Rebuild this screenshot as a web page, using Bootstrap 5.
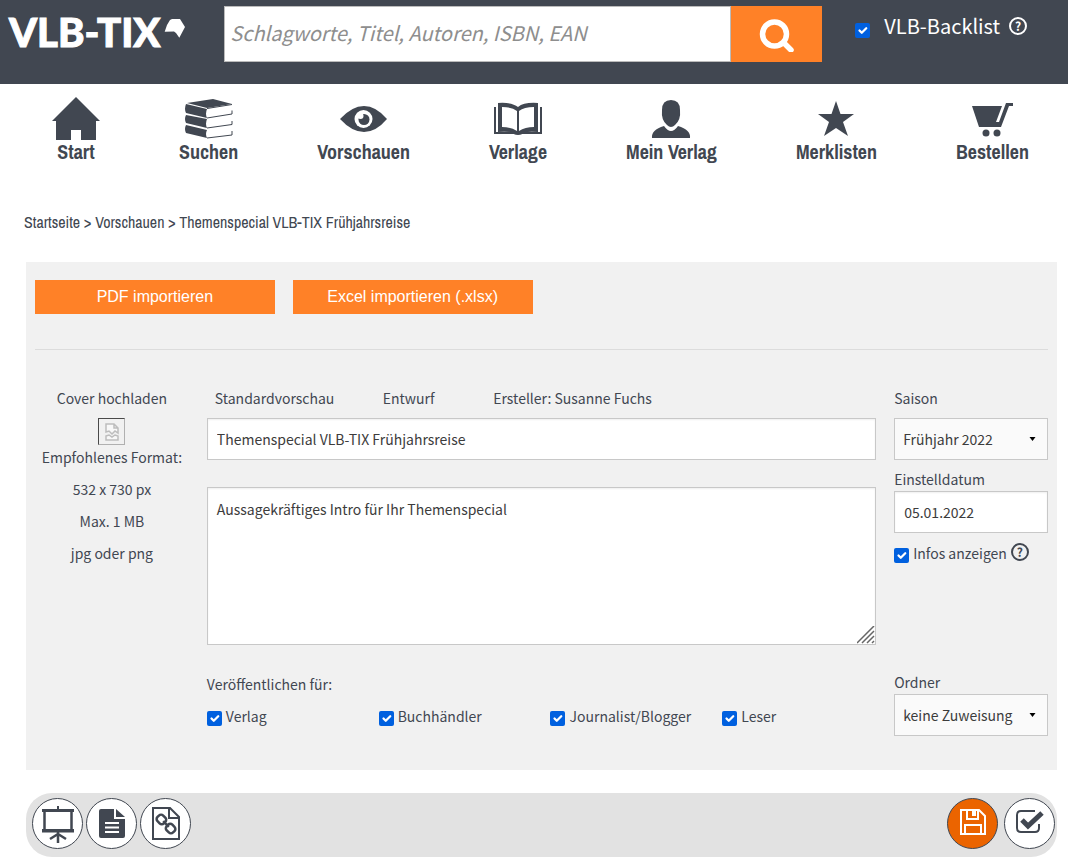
<!DOCTYPE html>
<html lang="de">
<head>
<meta charset="utf-8">
<meta name="viewport" content="width=device-width, initial-scale=1">
<title>VLB-TIX – Vorschau bearbeiten</title>
<link href="https://cdn.jsdelivr.net/npm/bootstrap@5.3.0/dist/css/bootstrap.min.css" rel="stylesheet">
<style>
  :root { --ink: #414751; --orange: #ff8127; --line: #c8c8c8; }
  body { font: 14px/20px "Noto Sans CJK SC", "Noto Sans", sans-serif; color: var(--ink); background: #fff; }
  svg { display: block; flex: none; }
  .topbar { background: var(--ink); min-height: 84px; padding-top: 6px; }
  .brand-box { width: 21%; padding: 6px 0 0 9px; gap: 4px; }
  .brand-box svg { margin-top: 6px; }
  .brand-link { color: #fff; text-decoration: none; font: 900 40px/40px Lato, sans-serif; -webkit-text-stroke: 1px #fff; }
  .search-box { width: 56%; height: 56px; }
  .search-box .form-control { border: 1px solid #bbb; border-radius: 0; padding: 0 5px 2px; font-size: 20px; color: var(--ink); }
  .search-box .form-control::placeholder { color: #8e8e8e; font-style: italic; opacity: 1; }
  .search-box .btn { width: 91px; flex: none; background: var(--orange); border: 0; border-radius: 0; padding: 0; }
  .backlist { padding: 8px 0 0 33px; }
  .backlist label { color: #fff; font-size: 20px; line-height: 24px; margin: 0 9px 0 14px; }
  .form-check-input[type=checkbox] { width: 15px; height: 15px; margin: 5px 4px 0 0; border: 0; border-radius: 2px; flex: none; }
  .backlist .form-check-input[type=checkbox] { margin: 8px 0 0; }
  .form-check-input:checked { background-color: #0060df; }
  .help { width: 18px; height: 18px; border: 2px solid currentColor; border-radius: 50%; background: none; padding: 0; font: bold 12px/14px "Noto Sans CJK SC", sans-serif; color: inherit; flex: none; }
  .main-nav { padding: 12px 39px 0 52px; }
  .main-nav a { color: var(--ink); text-decoration: none; font: bold 20px/24px "Liberation Sans Narrow", "Archivo Narrow", sans-serif; }
  .main-nav svg { height: 44px; fill: currentColor; }
  .crumbs { font: 16px/20px "Liberation Sans Narrow", "Archivo Narrow", sans-serif; padding: 48px 24px 30px; }
  .crumbs a { color: inherit; text-decoration: none; }
  .content { margin: 0 11px 0 26px; }
  .panel { background: #f1f1f1; padding: 18px 9px 34px; }
  .panel .row { --bs-gutter-x: 18px; }
  .btn-import { width: 100%; height: 34px; background: var(--orange); color: #fff; border: 0; border-radius: 0; padding: 0; font: 16px/32px "Liberation Sans", sans-serif; }
  .rule { border-top: 1px solid #dcdcdc; margin: 35px 0 38px; }
  .head { margin-bottom: 10px; }
  .field { height: 42px; border: 1px solid var(--line); border-radius: 0; padding: 0 9px; font-size: 14px; line-height: 20px; color: #3c3c3c; box-shadow: inset 0 1px 2px #0001; }
  textarea.field { height: 158px; padding: 11px 9px; resize: none; display: block; }
  select.field { padding: 0 8px; background: #fafafa url("data:image/svg+xml,%3Csvg xmlns='http://www.w3.org/2000/svg' viewBox='0 0 6 4'%3E%3Cpath d='M0 0h6L3 4z'/%3E%3C/svg%3E") no-repeat right 11px center / 7px 4px; box-shadow: none; }
  .intro { margin-top: 27px; }
  .publish { margin: 29px 0 12px; }
  .checks { padding-bottom: 10px; }
  .side .caption { margin: 9px 0 2px; }
  .infos { margin-top: 10px; }
  .infos .help { margin-left: 4px; }
  .grip { position: absolute; right: 1px; bottom: 1px; }
  .upload { width: 27px; height: 27px; padding: 0; border: 1px solid; border-color: #4a4a4a #b0b0b0 #b0b0b0 #4a4a4a; background: none; display: flex; align-items: center; justify-content: center; margin: 0 auto 2px; }
  .hints { gap: 12px; }
  .toolbar { background: #e2e2e2; border-radius: 26px; margin: 23px 0 9px; padding: 5px 2px 8px 6px; gap: 3px; }
  .round { width: 51px; height: 51px; border-radius: 50%; border: 1px solid var(--ink); background: #fff; color: var(--ink); padding: 0; display: flex; align-items: center; justify-content: center; }
  .round-save { background: #eb6400; color: #fff; margin-right: 3px; }
</style>
</head>
<body>
<header class="topbar d-flex align-items-start">
  <div class="brand-box d-flex">
    <a class="brand-link" href="#">VLB-TIX</a>
    <svg width="22" height="20" viewBox="0 0 22 20" fill="#fff" aria-hidden="true"><path d="M.7 13.700 3 7l3-5 2-1h8l5 8-5.700 10.700L12 15l-2-1.500z"/></svg>
  </div>
  <form class="search-box d-flex">
    <input class="form-control" type="search" aria-label="Suche" placeholder="Schlagworte, Titel, Autoren, ISBN, EAN">
    <button class="btn" type="button" aria-label="Suchen">
      <svg class="mx-auto" width="36" height="36" viewBox="0 0 36 36" fill="none" stroke="#fff"><circle cx="15.500" cy="18" r="12" stroke-width="5.500"/><path d="m25 27 7 7" stroke-width="5.500" stroke-linecap="round"/></svg>
    </button>
  </form>
  <div class="backlist d-flex align-items-center text-white">
    <input class="form-check-input" type="checkbox" id="backlist" checked>
    <label for="backlist">VLB-Backlist</label>
    <button class="help" type="button" aria-label="Hilfe zur Backlist">?</button>
  </div>
</header>

<nav class="main-nav d-flex justify-content-between" aria-label="Hauptnavigation">
  <a class="d-flex flex-column align-items-center" href="#"><svg width="48" viewBox="0 0 48 44"><path d="M24 1 48 25h-4v20H29V34H19v11H4V25H0z"/></svg>Start</a>
  <a class="d-flex flex-column align-items-center" href="#"><svg width="48" viewBox="0 0 48 44"><path d="M2 7 28 3l19 5-25 4z"/><path d="m1 8 21 5q-2 5 0 9L1 17q-2-4 0-9zM1 19l21 4q-2 5 0 9L1 27q-2-4 0-8zM1 29l21 5q-2 4 0 8L1 37q-2-4 0-8z"/><path d="m22 12.500 25-4M22 22l25-4v-3.500M22 32l25-3.500V25M22 42l25-3v-4" fill="none" stroke="currentColor"/></svg>Suchen</a>
  <a class="d-flex flex-column align-items-center" href="#"><svg width="48" viewBox="0 0 48 44"><path d="M0 23Q12 10 24 10t23 13Q36 36 24 36T0 23z"/><circle cx="23.500" cy="23" r="9" fill="#fff"/><circle cx="24" cy="23.500" r="5.500"/><circle cx="20.500" cy="20" r="3" fill="#fff"/></svg>Vorschauen</a>
  <a class="d-flex flex-column align-items-center" href="#"><svg width="48" viewBox="0 0 48 44"><path d="M4 7q14-1 20 4 6-5 20-4v29q-13-1-20 2-7-3-20-2z"/><path d="M8 11q10 0 15 4v20q-6-4-15-4zM40 11q-10 0-15 4v20q6-4 15-4z" fill="#fff"/><path d="M1 11v26h19q4 2 8 0h19V11" fill="none" stroke="currentColor" stroke-width="2"/></svg>Verlage</a>
  <a class="d-flex flex-column align-items-center" href="#"><svg width="40" viewBox="0 0 40 44"><path d="M20 4q9 0 9 10 1 10-5 15-4 4-8 0-6-5-5-15Q11 4 20 4z"/><path d="M13 30q7 10 14 0 13 4 12 12H1q-1-8 12-12z"/></svg>Mein Verlag</a>
  <a class="d-flex flex-column align-items-center" href="#"><svg width="38" viewBox="0 0 38 44"><path d="m19 5 4.500 13H37L26 26l5 14-12-8-12 8 5-14L1 18h13.500z"/></svg>Merklisten</a>
  <a class="d-flex flex-column align-items-center" href="#"><svg width="42" viewBox="0 0 42 44"><path d="M1 10h30l-6 16h3l7-19h7v3h-4l-8 21H8z"/><circle cx="15" cy="37" r="3.500"/><circle cx="26" cy="37" r="3.500"/></svg>Bestellen</a>
</nav>

<div class="crumbs"><a href="#">Startseite</a> &gt; <a href="#">Vorschauen</a> &gt; <span>Themenspecial VLB-TIX Frühjahrsreise</span></div>

<main class="content">
  <form class="panel">
    <div class="row">
      <div class="col-3"><button class="btn btn-import" type="button">PDF importieren</button></div>
      <div class="col-3"><button class="btn btn-import" type="button">Excel importieren (.xlsx)</button></div>
    </div>
    <div class="rule"></div>
    <div class="row">
      <div class="col-2 text-center text-nowrap">
        <label for="cover" class="head d-block">Cover hochladen</label>
        <button class="upload" type="button" id="cover">
          <svg width="16" height="18" viewBox="0 0 16 18" fill="#f8f8f8" stroke="#bdbdbd" stroke-width="1.500"><path d="M2 9V1h8l4 4v5l-3-2-3 3-3-3zM10 1v4h4M2 13l3-1 3 2 3-2 3 1v4H2z"/></svg>
        </button>
        <div class="hints d-flex flex-column"><span>Empfohlenes Format:</span><span>532 x 730 px</span><span>Max. 1 MB</span><span>jpg oder png</span></div>
      </div>
      <div class="col-8">
        <div class="row head text-nowrap">
          <div class="col-3"><span class="ps-2">Standardvorschau</span></div>
          <div class="col-2"><span class="ps-1">Entwurf</span></div>
          <div class="col-7">Ersteller: Susanne Fuchs</div>
        </div>
        <input class="form-control field" type="text" aria-label="Titel" value="Themenspecial VLB-TIX Frühjahrsreise">
        <div class="position-relative intro">
          <textarea class="form-control field" aria-label="Intro">Aussagekräftiges Intro für Ihr Themenspecial</textarea>
          <svg class="grip" width="18" height="18" viewBox="0 0 18 18" stroke="#666" stroke-width="1.500" aria-hidden="true"><path d="M0 17 17 0M5 17 17 5M10 17l7-7M15 17l2-2"/></svg>
        </div>
        <div class="publish">Veröffentlichen für:</div>
        <div class="row text-nowrap checks">
          <div class="col-3 d-flex"><input class="form-check-input" type="checkbox" id="c1" checked><label for="c1">Verlag</label></div>
          <div class="col-3 d-flex"><input class="form-check-input" type="checkbox" id="c2" checked><label for="c2">Buchhändler</label></div>
          <div class="col-3 d-flex"><input class="form-check-input" type="checkbox" id="c3" checked><label for="c3">Journalist/Blogger</label></div>
          <div class="col-3 d-flex"><input class="form-check-input" type="checkbox" id="c4" checked><label for="c4">Leser</label></div>
        </div>
      </div>
      <div class="side col-2 d-flex flex-column text-nowrap">
        <label for="saison" class="head">Saison</label>
        <select class="form-select field" id="saison"><option>Frühjahr 2022</option></select>
        <label for="datum" class="caption">Einstelldatum</label>
        <input class="form-control field" type="text" id="datum" value="05.01.2022">
        <div class="infos d-flex"><input class="form-check-input" type="checkbox" id="infos" checked><label for="infos">Infos anzeigen</label><button class="help" type="button" aria-label="Hilfe zu Infos">?</button></div>
        <label for="ordner" class="caption mt-auto">Ordner</label>
        <select class="form-select field" id="ordner"><option>keine Zuweisung</option></select>
      </div>
    </div>
  </form>

  <div class="toolbar d-flex" role="toolbar" aria-label="Aktionen">
    <button class="round" type="button" aria-label="Präsentation"><svg width="36" height="40" viewBox="0 0 36 40" fill="currentColor"><path d="M2 5h32v3H2zM2 25h32v3.500H2zM17 2h2v4h-2z"/><path d="M4.500 7v19M31.500 7v19M18 28v11M18 30l-8 5M18 30l8 5" fill="none" stroke="currentColor" stroke-width="2.500"/></svg></button>
    <button class="round" type="button" aria-label="Dokument"><svg width="26" height="30" viewBox="0 0 26 30" fill="currentColor"><path d="M2 0h13v10h11v17q0 2-2 2H2q-2 0-2-2V2q0-2 2-2zM17 0l9 8h-9z"/><path d="M6 14h14M6 18.500h14M6 23h14" stroke="#fff" stroke-width="2"/></svg></button>
    <button class="round" type="button" aria-label="Verknüpfung"><svg width="30" height="34" viewBox="0 0 30 34" fill="none" stroke="currentColor" stroke-width="2"><path d="M2 1h17l9 9v22H2zM18 1v10h10"/><g transform="rotate(45 15 17)" stroke-width="2.500"><rect x="4" y="13" width="9" height="8" rx="3"/><rect x="17" y="13" width="9" height="8" rx="3"/><path d="M11 17h8"/></g></svg></button>
    <button class="round round-save ms-auto" type="button" aria-label="Speichern"><svg width="26" height="30" viewBox="0 0 26 30" fill="none" stroke="currentColor" stroke-width="2"><path d="M1 1h18l6 6v18H1zM7 1v9h11V1M5 25v-9h16v9"/><path d="M12 1h4v6h-4z" fill="currentColor" stroke="none"/></svg></button>
    <button class="round" type="button" aria-label="Freigeben"><svg width="32" height="32" viewBox="0 0 32 32" fill="none" stroke="currentColor"><path d="M21 3H7Q3 3 3 7v13q0 4 4 4h14q4 0 4-4v-4" stroke-width="2"/><path d="m8 12 6 6L28 5" stroke-width="5"/></svg></button>
  </div>
</main>
</body>
</html>
